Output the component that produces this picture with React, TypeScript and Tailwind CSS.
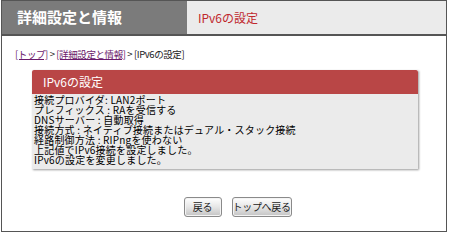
const jp = "font-['MS_UI_Gothic','Noto_Sans_CJK_JP',sans-serif]";

const lines = [
  "接続プロバイダ: LAN2ポート",
  "プレフィックス : RAを受信する",
  "DNSサーバー : 自動取得",
  "接続方式 : ネイティブ接続またはデュアル・スタック接続",
  "経路制御方法 : RIPngを使わない",
  "上記値でIPv6接続を設定しました。",
  "IPv6の設定を変更しました。",
];

function Button({ label, width }: { label: string; width: string }) {
  return (
    <button
      className={`${width} h-[20px] whitespace-nowrap rounded-[3px] border border-[#8a8a8a] bg-gradient-to-b from-[#ffffff] via-[#e6e6e6] to-[#c4c4c4] text-[10px] tracking-[-0.3px] leading-none text-[#222] shadow-[inset_0_0_0_1px_#f4f4f4]`}
    >
      {label}
    </button>
  );
}

export default function App() {
  return (
    <div className={`w-[450px] h-[233px] bg-white ${jp}`}>
      <div className="ml-[1px] w-[446px] h-[232px] border border-[#555] flex flex-col">
        {/* header */}
        <div className="flex h-[35px] border-b-2 border-[#555]">
          <div className="w-[185px] bg-[#7b7b7b] flex items-center pl-[15px] text-white text-[15px] font-bold">
            詳細設定と情報
          </div>
          <div className="flex-1 bg-[#ebebeb] flex items-center pl-[11px] text-[12px] text-[#c0282d]">
            IPv6の設定
          </div>
        </div>

        {/* breadcrumb */}
        <div className="pl-[13px] pt-[12px] text-[9.5px] tracking-[-0.4px] leading-[12px] text-[#222]">
          <a className="text-[#6b1a6b] underline">[トップ]</a>
          <span> &gt; </span>
          <a className="text-[#6b1a6b] underline">[詳細設定と情報]</a>
          <span> &gt; [IPv6の設定]</span>
        </div>

        {/* panel */}
        <div className="ml-[30px] mt-[10px] w-[386px] shadow-[1px_1px_2px_#9a9a9a]">
          <div className="h-[24px] bg-[#b94646] rounded-t-[2px] flex items-center pl-[11px] text-white text-[12px]">
            IPv6の設定
          </div>
          <div className="bg-[#ebebeb] pl-[2px] pt-[1px] pb-[4px] text-[10px] tracking-[0.2px] leading-[10px] text-black">
            {lines.map((l) => (
              <div key={l}>{l}</div>
            ))}
          </div>
        </div>

        {/* buttons */}
        <div className="flex justify-center gap-[10px] mt-[28px] pl-[27px]">
          <Button label="戻る" width="w-[38px]" />
          <Button label="トップへ戻る" width="w-[60px]" />
        </div>
      </div>
    </div>
  );
}
